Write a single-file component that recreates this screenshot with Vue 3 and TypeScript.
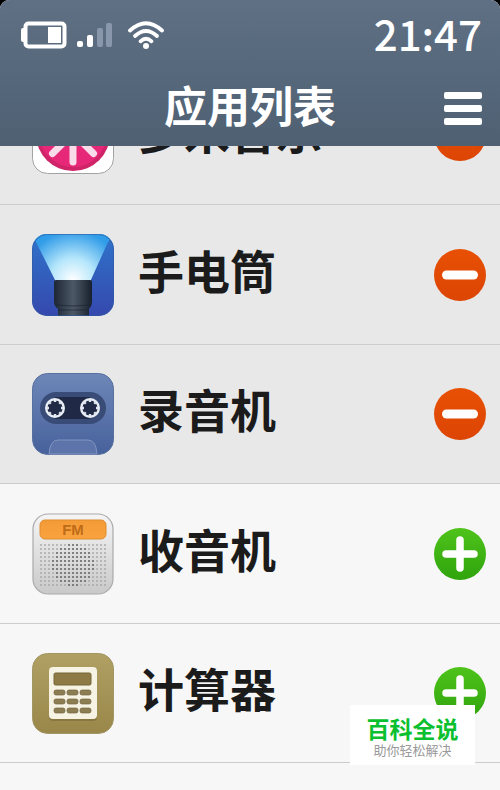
<script setup lang="ts">
import { ref } from 'vue'

type IconName = 'music' | 'torch' | 'recorder' | 'radio' | 'calculator'

interface AppEntry {
  name: string
  icon: IconName
  added: boolean
}

const apps = ref<AppEntry[]>([
  { name: '多米音乐', icon: 'music', added: true },
  { name: '手电筒', icon: 'torch', added: true },
  { name: '录音机', icon: 'recorder', added: true },
  { name: '收音机', icon: 'radio', added: false },
  { name: '计算器', icon: 'calculator', added: false },
])

const petals = Array.from({ length: 8 }, (_, i) => i * 45)
const teeth = Array.from({ length: 8 }, (_, i) => i * 45)

const dots = Array.from({ length: 11 * 17 }, (_, i) => {
  const col = i % 17
  const row = Math.floor(i / 17)
  const distance = Math.hypot(col - 8, row - 5)
  return { x: 9 + col * 4, y: 32 + row * 4, near: distance < 5.3 }
})

const keys = Array.from({ length: 9 }, (_, i) => ({
  x: 22 + (i % 3) * 13,
  y: 37 + Math.floor(i / 3) * 9,
}))

function toggle(app: AppEntry) {
  app.added = !app.added
}
</script>

<template>
  <div class="screen">
    <header class="top">
      <div class="status">
        <div class="indicators">
          <svg class="battery" width="46" height="28" viewBox="0 0 46 28" aria-hidden="true">
            <rect x="0" y="7" width="5" height="14" rx="2" fill="#fff" />
            <rect x="4.500" y="2.500" width="39" height="23" rx="3" fill="none" stroke="#fff" stroke-width="4" />
            <rect x="27" y="6" width="13" height="16" fill="#fff" />
          </svg>
          <svg class="signal" width="36" height="26" viewBox="0 0 36 26" aria-hidden="true">
            <rect x="0" y="19" width="6" height="6" rx="2" fill="#fff" />
            <rect x="10" y="13" width="6" height="12" rx="2" fill="#fff" />
            <rect x="20" y="6" width="6" height="19" rx="2" fill="#8897aa" />
            <rect x="29" y="1" width="6" height="24" rx="2" fill="#8897aa" />
          </svg>
          <svg class="wifi" width="38" height="30" viewBox="0 0 38 30" aria-hidden="true">
            <g fill="none" stroke="#fff" stroke-width="3.800" stroke-linecap="round">
              <path d="M3 10.500Q19-4 35 10.500" />
              <path d="M8 16Q19 6 30 16" />
              <path d="M13.500 21.300Q19 16 24.500 21.300" />
            </g>
            <circle cx="19" cy="26" r="3" fill="#fff" />
          </svg>
        </div>
        <time class="clock">21:47</time>
      </div>
      <div class="bar">
        <h1 class="title">应用列表</h1>
        <button class="menu" type="button" aria-label="菜单">
          <span></span><span></span><span></span>
        </button>
      </div>
    </header>

    <main class="viewport">
      <ul class="list">
        <li v-for="app in apps" :key="app.name" class="row" :class="{ added: app.added }">
          <svg class="icon" viewBox="0 0 82 82" aria-hidden="true">
            <template v-if="app.icon === 'music'">
              <rect x=".5" y=".5" width="81" height="79" rx="15" fill="#fff" stroke="#a3a3a3" />
              <circle cx="41" cy="40" r="37" fill="#cf2468" />
              <circle cx="41" cy="39" r="34" fill="#e72879" />
              <path
                v-for="angle in petals"
                :key="angle"
                d="M41 48V68"
                :transform="`rotate(${angle} 41 39)`"
                stroke="#f9dce9"
                stroke-width="7"
                stroke-linecap="round"
              />
            </template>

            <template v-else-if="app.icon === 'torch'">
              <defs>
                <linearGradient id="torch-bg" x2="0" y2="1">
                  <stop offset="0" stop-color="#2f74cb" />
                  <stop offset="1" stop-color="#3548ad" />
                </linearGradient>
                <radialGradient id="torch-beam" cx="41" cy="46" r="49" gradientUnits="userSpaceOnUse">
                  <stop offset="0" stop-color="#fff" />
                  <stop offset=".45" stop-color="#b5e6fb" />
                  <stop offset="1" stop-color="#319ce8" />
                </radialGradient>
                <linearGradient id="torch-body">
                  <stop offset="0" stop-color="#1c2634" />
                  <stop offset=".5" stop-color="#4d5866" />
                  <stop offset="1" stop-color="#17202d" />
                </linearGradient>
                <clipPath id="torch-clip"><rect width="82" height="82" rx="15" /></clipPath>
              </defs>
              <g clip-path="url(#torch-clip)">
                <rect width="82" height="82" fill="url(#torch-bg)" />
                <path d="M0 0H82L76 8 58 48H24L6 12Z" fill="url(#torch-beam)" />
                <path d="M22 48Q22 46 24 46H58Q60 46 60 48V68Q60 72 57 75V82H26V75Q22 72 22 68Z" fill="url(#torch-body)" />
                <path d="M24 71Q41 73 58 71M26 76H57" stroke="#18212d" stroke-opacity=".6" fill="none" />
              </g>
              <rect x=".5" y=".5" width="81" height="81" rx="15" fill="none" stroke="#315b9e" stroke-opacity=".6" />
            </template>

            <template v-else-if="app.icon === 'recorder'">
              <defs>
                <linearGradient id="recorder-bg" x2="0" y2="1">
                  <stop offset="0" stop-color="#6e87b8" />
                  <stop offset="1" stop-color="#47619c" />
                </linearGradient>
              </defs>
              <rect x=".5" y=".5" width="81" height="81" rx="15" fill="url(#recorder-bg)" stroke="#58709f" />
              <rect x="8" y="19" width="66" height="32" rx="16" fill="#394c78" />
              <rect x="23" y="24" width="35" height="22" fill="#202a46" />
              <g v-for="cx in [23, 58]" :key="cx">
                <circle :cx="cx" cy="35" r="8.800" fill="#202a46" stroke="#e9edf5" stroke-width="2.400" />
                <path
                  v-for="angle in teeth"
                  :key="angle"
                  :d="`M${cx} 27V29`"
                  :transform="`rotate(${angle} ${cx} 35)`"
                  stroke="#dfe5ef"
                  stroke-width="2.400"
                />
              </g>
              <path d="M17 81Q18 67 26 67H56Q64 67 65 81Z" fill="#5c74aa" stroke="#8195c0" />
            </template>

            <template v-else-if="app.icon === 'radio'">
              <defs>
                <linearGradient id="radio-bg" x2="0" y2="1">
                  <stop offset="0" stop-color="#f5f5f5" />
                  <stop offset="1" stop-color="#c9c9c9" />
                </linearGradient>
                <linearGradient id="radio-label" x2="0" y2="1">
                  <stop offset="0" stop-color="#f39a35" />
                  <stop offset="1" stop-color="#faa43f" />
                </linearGradient>
              </defs>
              <rect x="1" y="1" width="80" height="80" rx="15" fill="url(#radio-bg)" stroke="#aaa" stroke-width="1.200" />
              <rect x="8" y="7" width="66" height="19" rx="5" fill="url(#radio-label)" stroke="#df8d31" />
              <text class="fm" x="41" y="22" text-anchor="middle">FM</text>
              <circle
                v-for="(dot, i) in dots"
                :key="i"
                :cx="dot.x"
                :cy="dot.y"
                :r="dot.near ? 1.1 : 0.9"
                :fill="dot.near ? '#696969' : '#a4a4a4'"
              />
            </template>

            <template v-else>
              <defs>
                <linearGradient id="calc-bg" x2="0" y2="1">
                  <stop offset="0" stop-color="#b0a064" />
                  <stop offset="1" stop-color="#998749" />
                </linearGradient>
              </defs>
              <rect x=".5" y="1.500" width="81" height="80" rx="15" fill="url(#calc-bg)" stroke="#a29665" />
              <rect x="17" y="16" width="48" height="53" rx="4" fill="#786a39" opacity=".6" />
              <rect x="17" y="15" width="48" height="52" rx="4" fill="#f7f3e4" />
              <rect x="22" y="21" width="37" height="12" rx="1.500" fill="#8e7a45" stroke="#746438" />
              <rect
                v-for="(k, i) in keys"
                :key="i"
                :x="k.x"
                :y="k.y + 1"
                width="11"
                height="5"
                rx="2"
                fill="#8c7d53"
                stroke="#72643d"
                stroke-width=".7"
              />
            </template>
          </svg>

          <span class="name">{{ app.name }}</span>

          <button
            class="toggle"
            type="button"
            :aria-label="(app.added ? '移除' : '添加') + app.name"
            @click="toggle(app)"
          >
            <svg width="36" height="36" viewBox="0 0 36 36" aria-hidden="true">
              <path
                :d="app.added ? 'M4.500 18H31.500' : 'M4 18H32M18 4V32'"
                stroke="#fff"
                :stroke-width="app.added ? 9 : 7.5"
                stroke-linecap="round"
              />
            </svg>
          </button>
        </li>
      </ul>
    </main>

    <aside class="badge">
      <strong>百科全说</strong>
      <span>助你轻松解决</span>
    </aside>
  </div>
</template>

<style>
body {
  background: #000;
}
</style>

<style scoped>
.screen {
  position: relative;
  min-height: 100vh;
  overflow: hidden;
  border-radius: 9px 9px 0 0;
  background: #f7f7f7;
  font-family: "Noto Sans CJK SC", sans-serif;
}

.top {
  color: #fff;
  background: linear-gradient(#5f7084, #4e6072);
}

.status {
  display: flex;
  align-items: center;
  justify-content: space-between;
  height: 70px;
  padding: 0 18px 0 21px;
}

.indicators {
  display: flex;
  align-items: center;
  gap: 10px;
}

.wifi {
  margin-left: 4px;
}

.clock {
  font-size: 42px;
  font-weight: 500;
  line-height: 66px;
  padding-bottom: 4px;
}

.bar {
  display: grid;
  grid-template-columns: 1fr auto 1fr;
  align-items: center;
  height: 76px;
  padding: 0 18px;
}

.title {
  grid-column: 2;
  margin: 0;
  padding-bottom: 8px;
  font-size: 43px;
  font-weight: 700;
  line-height: 60px;
}

.menu {
  display: flex;
  flex-direction: column;
  gap: 6px;
  justify-self: end;
  padding: 0;
  border: 0;
  background: none;
  cursor: pointer;
}

.menu span {
  width: 38px;
  height: 7px;
  border-radius: 2px;
  background: #fff;
}

.viewport {
  overflow: hidden;
}

/* The list is scrolled so that its first entry is partly under the header. */
.list {
  display: grid;
  grid-template-rows: 139px 140px 139px 140px 139px;
  margin: -80px 0 0;
  padding: 0;
  list-style: none;
}

.row {
  display: flex;
  align-items: center;
  gap: 24px;
  box-sizing: border-box;
  padding: 0 14px 0 32px;
  border-bottom: 1px solid #cdcdcd;
  background: #f7f7f7;
}

.row.added {
  background: #e8e8e8;
}

.icon {
  flex: none;
  width: 82px;
  height: 82px;
}

.fm {
  font-family: "Liberation Sans", sans-serif;
  font-size: 15px;
  font-weight: 700;
  fill: #bf6c19;
}

.name {
  flex: 1;
  padding-bottom: 12px;
  color: #1b1b1b;
  font-size: 46px;
  font-weight: 700;
  line-height: 60px;
}

.toggle {
  display: grid;
  place-items: center;
  flex: none;
  width: 52px;
  height: 52px;
  padding: 0;
  border: 0;
  border-radius: 50%;
  background: linear-gradient(#4fc31a, #2fa40d);
  cursor: pointer;
}

.added .toggle {
  background: linear-gradient(#e85004, #dc4504);
}

.badge {
  position: absolute;
  right: 25px;
  bottom: 25px;
  display: flex;
  flex-direction: column;
  align-items: center;
  box-sizing: border-box;
  width: 125px;
  height: 60px;
  padding-top: 10px;
  background: #fff;
}

.badge strong {
  color: #0bc02f;
  font-size: 23px;
  font-weight: 700;
  line-height: 26px;
}

.badge span {
  color: #999;
  font-size: 13px;
  line-height: 18px;
}
</style>
